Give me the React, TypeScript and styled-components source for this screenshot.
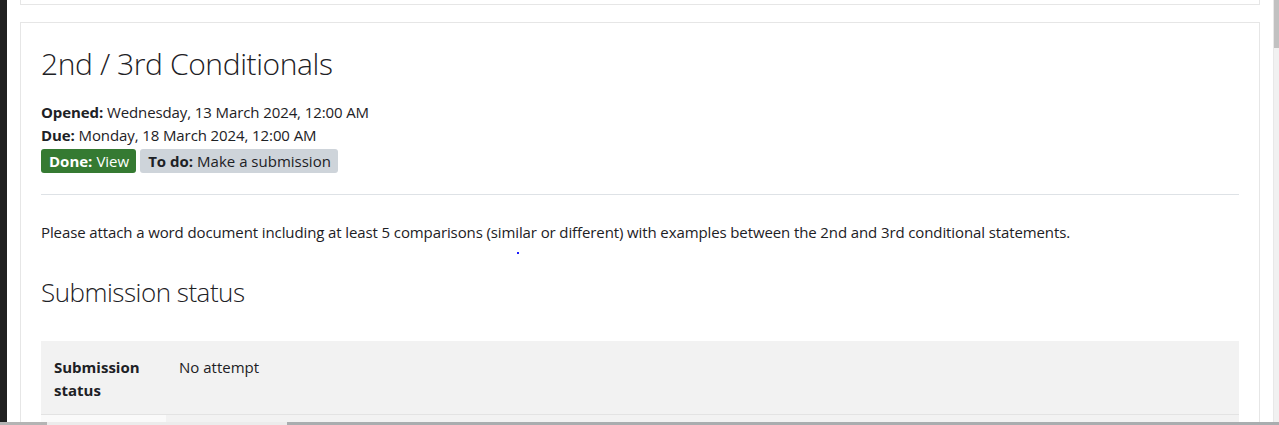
import React from "react";
import styled, { createGlobalStyle } from "styled-components";

const Global = createGlobalStyle`
  html, body { margin: 0; padding: 0; background: #fff; }
  body { font-family: "Open Sans", "Noto Sans", sans-serif; color: #1d2125; overflow: hidden; }
  * { box-sizing: border-box; }
`;

const Screen = styled.div`
  width: 1279px;
  height: 425px;
  display: flex;
  flex-direction: column;
  overflow: hidden;
`;

const Body = styled.div`
  flex: 1;
  display: flex;
  min-height: 0;
`;

const DarkStrip = styled.div`
  width: 7px;
  background: #202020;
`;

const Content = styled.div`
  flex: 1;
  padding: 0 13px;
  display: flex;
  flex-direction: column;
  gap: 17px;
  overflow: hidden;
`;

const VScroll = styled.div`
  width: 6px;
  background: #f1f1f1;
  border-left: 1px solid #e8e8e8;
  position: relative;
`;

const Thumb = styled.div`
  position: absolute;
  top: 0;
  left: 0;
  right: 0;
  height: 48px;
  background: #c1c1c1;
`;

const HScroll = styled.div`
  height: 3px;
  display: flex;
  background: #e2e2e2;
`;

const HSeg = styled.div<{ $w: number; $c: string }>`
  width: ${(p) => p.$w}px;
  background: ${(p) => p.$c};
`;

const TopCard = styled.div`
  height: 5px;
  flex-shrink: 0;
  border: 1px solid #e6e6e6;
  border-top: none;
`;

const Card = styled.div`
  border: 1px solid #e6e6e6;
  padding: 20px 20px 0;
  flex-shrink: 0;
`;

const Title = styled.h2`
  margin: 3px 0 0;
  font-weight: 300;
  font-size: 30px;
  letter-spacing: -0.4px;
  line-height: 36px;
`;

const Dates = styled.div`
  margin-top: 19px;
  font-size: 15px;
  line-height: 23px;
  letter-spacing: -0.1px;
`;

const Label = styled.strong`
  font-weight: 700;
`;

const Badges = styled.div`
  display: flex;
  gap: 4px;
  margin-top: 2px;
`;

const Badge = styled.span<{ $variant: "done" | "todo" }>`
  display: inline-flex;
  align-items: center;
  height: 24px;
  padding: 0 7px 0 8px;
  border-radius: 3px;
  font-size: 15px;
  background: ${(p) => (p.$variant === "done" ? "#357a32" : "#ced4da")};
  color: ${(p) => (p.$variant === "done" ? "#fff" : "#1d2125")};
  gap: 4px;
`;

const Divider = styled.hr`
  margin: 21px 0 0;
  border: none;
  border-top: 1px solid #dee2e6;
`;

const Description = styled.p`
  margin: 26px 0 0;
  font-size: 15px;
  line-height: 23px;
  letter-spacing: -0.11px;
  position: relative;
`;

const Dot = styled.span`
  position: absolute;
  left: 476px;
  top: 31px;
  width: 2px;
  height: 2px;
  background: #1a1aff;
`;

const SectionTitle = styled.h3`
  margin: 33px 0 0;
  font-weight: 300;
  font-size: 26px;
  letter-spacing: -0.5px;
  line-height: 31px;
`;

const Table = styled.div`
  margin-top: 33px;
  display: grid;
  grid-template-columns: 125px 1fr;
`;

const Th = styled.div<{ $bg: string }>`
  background: ${(p) => p.$bg};
  padding: 15px 13px 12px;
  font-weight: 700;
  font-size: 15px;
  line-height: 23px;
  border-bottom: 1px solid #e3e3e3;
`;

const Td = styled.div<{ $bg: string }>`
  background: ${(p) => p.$bg};
  padding: 15px 13px 12px;
  font-size: 15px;
  line-height: 23px;
  border-bottom: 1px solid #e3e3e3;
`;

export default function App() {
  return (
    <Screen>
      <Global />
      <Body>
        <DarkStrip />
        <Content>
          <TopCard />
          <Card>
            <Title>2nd / 3rd Conditionals</Title>
            <Dates>
              <div>
                <Label>Opened:</Label> Wednesday, 13 March 2024, 12:00 AM
              </div>
              <div>
                <Label>Due:</Label> Monday, 18 March 2024, 12:00 AM
              </div>
            </Dates>
            <Badges>
              <Badge $variant="done">
                <Label>Done:</Label>View
              </Badge>
              <Badge $variant="todo">
                <Label>To do:</Label>Make a submission
              </Badge>
            </Badges>
            <Divider />
            <Description>
              Please attach a word document including at least 5 comparisons (similar or different) with
              examples between the 2nd and 3rd conditional statements.
              <Dot />
            </Description>
            <SectionTitle>Submission status</SectionTitle>
            <Table>
              <Th $bg="#f2f2f2">Submission status</Th>
              <Td $bg="#f2f2f2">No attempt</Td>
              <Th $bg="#fafafa">Grading status</Th>
              <Td $bg="#f2f2f2">Not graded</Td>
            </Table>
          </Card>
        </Content>
        <VScroll>
          <Thumb />
        </VScroll>
      </Body>
      <HScroll>
        <HSeg $w={47} $c="#b4b4b4" />
        <HSeg $w={240} $c="#ececec" />
        <HSeg $w={992} $c="#a9adaf" />
      </HScroll>
    </Screen>
  );
}
